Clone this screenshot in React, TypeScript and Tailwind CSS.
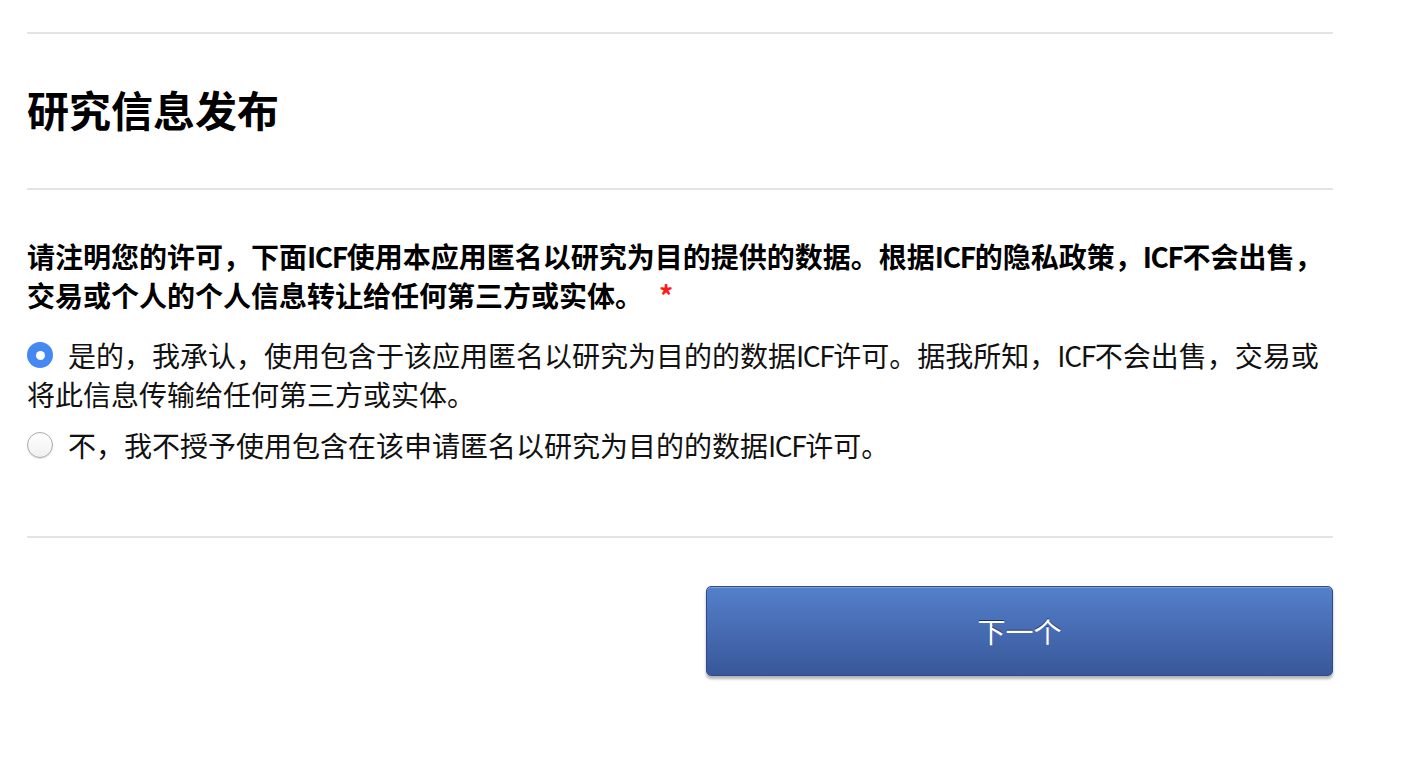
import React, { useState } from 'react';

const FONT = '"Noto Sans CJK SC", "Noto Sans", sans-serif';

// Latin acronym inside CJK text, tightened a little so the lines wrap like the reference
const Icf: React.FC = () => <span className="tracking-[-0.05em]">ICF</span>;

const Radio: React.FC<{ checked: boolean; onClick: () => void }> = ({ checked, onClick }) => (
  <button
    type="button"
    onClick={onClick}
    className={
      checked
        ? 'mt-[6px] flex h-[26px] w-[26px] shrink-0 items-center justify-center rounded-full bg-[#4688f1]'
        : 'mt-[6px] flex h-[26px] w-[26px] shrink-0 items-center justify-center rounded-full border border-[#a9a9a9] bg-gradient-to-b from-white to-[#f0f0f0] shadow-[0_1px_1px_rgba(0,0,0,0.12)]'
    }
  >
    {checked && <span className="h-[9px] w-[9px] rounded-full bg-white" />}
  </button>
);

export default function App() {
  const [choice, setChoice] = useState<'yes' | 'no'>('yes');

  return (
    <div className="min-h-screen bg-white" style={{ fontFamily: FONT }}>
      <div className="ml-[27px] w-[1306px] pt-[32px]">
        <div className="h-[2px] bg-[#e3e3e3]" />

        <h1 className="mt-[54px] text-[42px] font-bold leading-[42px] text-black">研究信息发布</h1>

        <div className="mt-[58px] h-[2px] bg-[#e3e3e3]" />

        <p className="mt-[47px] text-[28px] font-bold leading-[39px] text-black">
          请注明您的许可，下面<Icf />使用本应用匿名以研究为目的提供的数据。根据<Icf />的隐私政策，<Icf />不会出售，交易或个人的个人信息转让给任何第三方或实体。
          <span className="ml-[16px] text-[#ff1a1a]">*</span>
        </p>

        <div className="mt-[21px] flex flex-col gap-[12px]">
          <label className="block text-[28px] leading-[39px] text-[#111]">
            <span className="float-left mr-[15px]">
              <Radio checked={choice === 'yes'} onClick={() => setChoice('yes')} />
            </span>
            是的，我承认，使用包含于该应用匿名以研究为目的的数据<Icf />许可。据我所知，<Icf />不会出售，交易或将此信息传输给任何第三方或实体。
          </label>
          <label className="block text-[28px] leading-[39px] text-[#111]">
            <span className="float-left mr-[15px]">
              <Radio checked={choice === 'no'} onClick={() => setChoice('no')} />
            </span>
            不，我不授予使用包含在该申请匿名以研究为目的的数据<Icf />许可。
          </label>
        </div>

        <div className="mt-[71px] h-[2px] bg-[#e3e3e3]" />

        <div className="mt-[48px] flex justify-end">
          <button
            type="button"
            className="h-[90px] w-[627px] rounded-[5px] border border-[#2f4a86] bg-gradient-to-b from-[#5480cb] to-[#39579a] text-[28px] text-white shadow-[inset_0_1px_0_rgba(255,255,255,0.25),0_3px_3px_rgba(0,0,0,0.3)] [text-shadow:0_-1px_0_rgba(0,0,40,0.6)]"
          >
            下一个
          </button>
        </div>
      </div>
    </div>
  );
}
